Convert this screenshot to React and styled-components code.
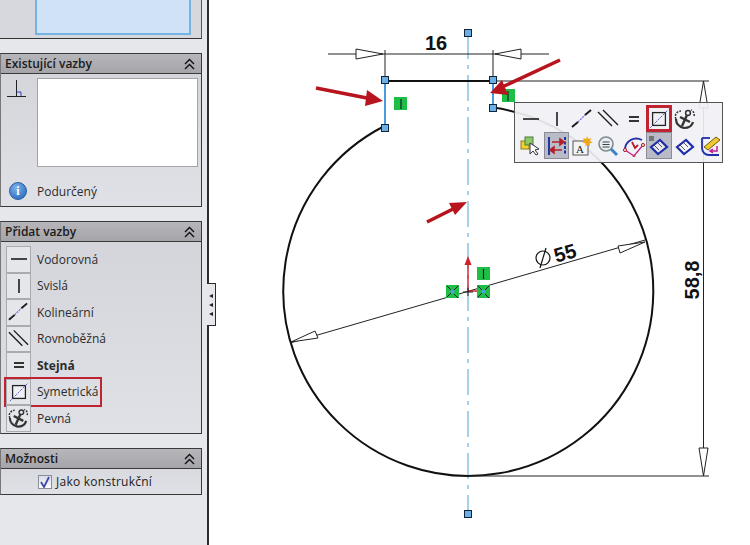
import React from "react";
import styled, { createGlobalStyle } from "styled-components";

const Global = createGlobalStyle`
  html, body { margin: 0; padding: 0; background: #fff; }
  body { font-family: "Open Sans", "Noto Sans", sans-serif; overflow: hidden; }
`;

const LineIcon = ({ children, size = 20 }) => (
  <svg width={size} height={size} viewBox={`0 0 ${size} ${size}`} fill="none" stroke="#1c1c1c" strokeWidth="1.6">
    {children}
  </svg>
);

const Horizontal = () => <LineIcon><path d="M2 10h16" /></LineIcon>;
const Vertical = () => <LineIcon><path d="M10 3v14" /></LineIcon>;
const Collinear = () => (
  <LineIcon size={24}>
    <path d="M2 20l6-5M15 8l6-5" strokeWidth="2" />
    <path d="M8 15l7-7" stroke="#6a6ad8" strokeWidth="1.200" strokeDasharray="2 1" />
  </LineIcon>
);
const Parallel = () => <LineIcon size={24}><path d="M2 5l14 14M7 3l15 15" strokeWidth="1.400" /></LineIcon>;
const Equal = () => <LineIcon size={16}><path d="M3 6h10M3 10h10" strokeWidth="2" stroke="#333" /></LineIcon>;
const Symmetric = () => (
  <svg width="22" height="22" viewBox="0 0 24 24" fill="none">
    <rect x="5" y="5" width="14" height="14" fill="#eef0f3" stroke="#222" strokeWidth="1.400" />
    <path d="M2 22L22 2" stroke="#5a5ad0" strokeWidth="1" strokeDasharray="3 1" />
  </svg>
);
const Anchor = () => (
  <svg width="24" height="24" viewBox="0 0 24 24" fill="none" stroke="#333" strokeWidth="1.500">
    <path d="M3 12c-2-4 1-8 5-8M21 9c1-3-1-5-3-6" strokeDasharray="2 1.200" />
    <circle cx="15" cy="6" r="2.400" />
    <path d="M14 8L9 19M7 10l10 5" strokeWidth="2.400" />
    <path d="M3 12c0 5 4 8 8 9 4 0 8-2 9-6" strokeWidth="2.200" />
  </svg>
);

const SelectIcon = () => (
  <svg width="22" height="22" viewBox="0 0 22 22">
    <rect x="1" y="6" width="8" height="8" fill="#f2d22e" stroke="#8a7a20" />
    <rect x="5" y="2" width="8" height="8" fill="#8ec86a" stroke="#4a7a3a" />
    <path d="M10 8l0 11 3-3 3 4 2-1-3-4 4-1z" fill="#fff" stroke="#333" />
  </svg>
);
const FlipIcon = () => (
  <svg width="22" height="22" viewBox="0 0 22 22" fill="none">
    <path d="M3 2v18" stroke="#2434a8" strokeWidth="2" />
    <path d="M19 2v18" stroke="#2434a8" strokeWidth="2" strokeDasharray="3 1.500" />
    <path d="M6 7h8M14 4l4 3-4 3z" stroke="#b3202a" strokeWidth="1.600" fill="#b3202a" />
    <path d="M16 15H8M8 12l-4 3 4 3z" stroke="#b3202a" strokeWidth="1.600" fill="#b3202a" />
  </svg>
);
const NoteIcon = () => (
  <svg width="22" height="22" viewBox="0 0 22 22">
    <rect x="2" y="6" width="15" height="14" fill="#f4f4f4" stroke="#555" />
    <text x="5" y="18" fontFamily="Liberation Serif, serif" fontSize="11" fill="#222">A</text>
    <path d="M16 1l1.400 3 3-1-1.400 3 2.600 1.600-3 .8.4 3-2.400-2-2.400 2 .4-3-3-.8L13.200 6l-1-3 3 1z" fill="#f0a818" />
  </svg>
);
const ZoomIcon = () => (
  <svg width="22" height="22" viewBox="0 0 22 22" fill="none">
    <circle cx="9" cy="9" r="7" fill="#e8eef2" stroke="#7e8a92" strokeWidth="1.600" />
    <path d="M5.500 7h7M5.500 9.500h7M5.500 12h7" stroke="#444" strokeWidth="1.100" />
    <path d="M14 14l6 6" stroke="#3c82c8" strokeWidth="3" />
  </svg>
);
const ArcIcon = () => (
  <svg width="24" height="22" viewBox="0 0 24 22" fill="none">
    <path d="M3 15C3 6 12 1 20 5" stroke="#2434a8" strokeWidth="1.800" />
    <path d="M3 15l9 6 9-11" stroke="#c01a8a" strokeWidth="1.200" />
    <path d="M10 7l3 6 3-3" stroke="#b3202a" strokeWidth="1.800" />
    <circle cx="3" cy="15" r="1.600" fill="#f4d0d8" stroke="#b3202a" />
    <circle cx="21" cy="10" r="1.600" fill="#f4d0d8" stroke="#b3202a" />
    <circle cx="12" cy="21" r="1" fill="#f4d0d8" stroke="#b3202a" />
  </svg>
);
const DimIcon = ({ marked }) => (
  <svg width="22" height="22" viewBox="0 0 22 22" fill="none">
    <path d="M3 12L12 5l7 7-9 7z" fill={marked ? "#e8e8ee" : "#f6f6fa"} stroke="#1f2fa8" strokeWidth="2.200" />
    {marked && <rect x="1" y="1" width="5" height="5" fill="#74777c" />}
    <path d="M6 10l5 5M10 8l4 4" stroke="#444" strokeWidth=".9" />
  </svg>
);
const EditIcon = () => (
  <svg width="24" height="24" viewBox="0 0 24 24" fill="none">
    <path d="M3 4v10c0 4 3 7 7 7h10" stroke="#1f2fa8" strokeWidth="1.800" />
    <path d="M3 4h8" stroke="#1f2fa8" strokeWidth="1.800" />
    <path d="M5 13L17 3l4 3-12 10z" fill="#f0c92e" stroke="#6a5a10" />
    <path d="M18 12v5h-6M14 15l-3 2 3 2" stroke="#c01a9a" strokeWidth="1.500" />
  </svg>
);

const Canvas = () => (
  <DrawingSvg viewBox="209 0 541 545">
    {/* centre line */}
    <path d="M468 33V514" stroke="#a6d2ea" strokeWidth="2" strokeDasharray="26 6 4 6" />

    {/* circle and flats */}
    <path d="M385 128L384.500 126A185 185 0 1 0 493 107.600" fill="none" stroke="#111" strokeWidth="2" />
    <path d="M385 81H493" stroke="#111" strokeWidth="2" />
    <path d="M385 81V128M493 81V108" stroke="#4a9ae0" strokeWidth="2" />

    {/* 16 */}
    <DimLine d="M328 54H549M385 50V80M493 50V80" />
    <ArrowHead points="383,54 356,49 356,59" />
    <ArrowHead points="495,54 521,49 521,59" />
    <DimText x="436" y="50" textAnchor="middle" fontSize="20">16</DimText>

    {/* diameter */}
    <DimLine d="M290 343L645 240" />
    <ArrowHead points="645,242 618,246 620,253" />
    <ArrowHead points="291,342 315,331 318,338" />
    <circle cx="543" cy="258" r="7" fill="none" stroke="#111" strokeWidth="1.200" />
    <path d="M546 248L540 268" stroke="#111" strokeWidth="1.200" />
    <DimText x="565" y="260" textAnchor="middle" fontSize="20" transform="rotate(-16 565 253)">55</DimText>

    {/* 58,8 */}
    <DimLine d="M493 81H709M468 476H709M703.500 81V476" />
    <ArrowHead points="703.500,81 699,108 708,108" />
    <ArrowHead points="703.500,476 699,448 708,448" />
    <DimText x="692" y="287" textAnchor="middle" fontSize="20" transform="rotate(-90 692 280)">58,8</DimText>

    {/* origin */}
    <path d="M468 292V262M468 291H478" stroke="#d0202a" strokeWidth="1.400" />
    <path d="M468 256l-3.500 9h7z" fill="#d0202a" />
    <path d="M463 292H473M468 288V296" stroke="#222" strokeWidth="1" />

    {/* relation badges */}
    <Badge x="394" y="97" width="13" height="13" />
    <path d="M401 99V109" stroke="#123" strokeWidth="1.200" />
    <Badge x="502" y="89" width="13" height="13" />
    <path d="M508 91V101" stroke="#123" strokeWidth="1.200" />
    <Badge x="477" y="267" width="13" height="13" />
    <path d="M483.500 269V279" stroke="#123" strokeWidth="1.200" />
    <Badge x="446" y="285" width="13" height="13" />
    <path d="M447 297L458 286M447 286l4 4M454 294l4 4" stroke="#123" strokeWidth="1" />
    <circle cx="452.500" cy="291.500" r="2" fill="#4aa0e0" />
    <Badge x="477" y="285" width="13" height="13" />
    <path d="M478 297L489 286M478 286l4 4M485 294l4 4" stroke="#123" strokeWidth="1" />
    <circle cx="483.500" cy="291.500" r="2" fill="#4aa0e0" />

    {/* handles */}
    {[[468, 33], [468, 514], [385, 80], [493, 80], [385, 128], [493, 108]].map(([x, y]) => (
      <Handle key={`${x}-${y}`} x={x - 3.5} y={y - 3.5} width="7" height="7" />
    ))}

    {/* red callout arrows */}
    <path d="M316 88L372 99" stroke="#b8141e" strokeWidth="3.500" />
    <path d="M383 101L367 90L365 106z" fill="#b8141e" />
    <path d="M560 60L500 88" stroke="#b8141e" strokeWidth="3.500" />
    <path d="M490 93L502 80L508 95z" fill="#b8141e" />
    <path d="M427 222L455 208" stroke="#b8141e" strokeWidth="3.500" />
    <path d="M467 202L449 203L455 215z" fill="#b8141e" />
  </DrawingSvg>
);

export default function App() {
  const relations = [
    { label: "Vodorovná", icon: <Horizontal /> },
    { label: "Svislá", icon: <Vertical /> },
    { label: "Kolineární", icon: <Collinear /> },
    { label: "Rovnoběžná", icon: <Parallel /> },
    { label: "Stejná", icon: <Equal />, bold: true },
    { label: "Symetrická", icon: <Symmetric />, marked: true },
    { label: "Pevná", icon: <Anchor /> },
  ];

  return (
    <Page>
      <Global />
      <Sidebar>
        <TopPanel>
          <SelectionBox />
        </TopPanel>

        <Panel>
          <PanelTitle title="Existující vazby" />
          <ExistingBody>
            <ExistingRow>
              <svg width="22" height="22" viewBox="0 0 22 22" fill="none" stroke="#222" strokeWidth="1">
                <path d="M1 18.500H20M10.500 2V18" />
                <path d="M10.500 14H15V18" stroke="#3040b0" />
              </svg>
              <RelationsList />
            </ExistingRow>
            <StatusRow>
              <InfoIcon>i</InfoIcon>
              <StatusText>Podurčený</StatusText>
            </StatusRow>
          </ExistingBody>
        </Panel>

        <Panel>
          <PanelTitle title="Přidat vazby" />
          <RelationList>
            {relations.map((r) => (
              <RelationRow key={r.label} $marked={r.marked}>
                <RelationIcon>{r.icon}</RelationIcon>
                <RelationLabel $bold={r.bold}>{r.label}</RelationLabel>
              </RelationRow>
            ))}
          </RelationList>
        </Panel>

        <Panel>
          <PanelTitle title="Možnosti" />
          <OptionBody>
            <CheckBox>
              <svg width="12" height="12" viewBox="0 0 12 12" fill="none">
                <path d="M2 6l3 5 5-10" stroke="#3b4aa8" strokeWidth="1.800" />
              </svg>
            </CheckBox>
            <OptionLabel>Jako konstrukční</OptionLabel>
          </OptionBody>
        </Panel>

        <CollapseTab>
          <i />
          <i />
          <i />
        </CollapseTab>
      </Sidebar>

      <CanvasArea>
        <Canvas />
        <Popup>
          <PopupCell><Horizontal /></PopupCell>
          <PopupCell><Vertical /></PopupCell>
          <PopupCell><Collinear /></PopupCell>
          <PopupCell><Parallel /></PopupCell>
          <PopupCell><Equal /></PopupCell>
          <PopupCell $marked><Symmetric /></PopupCell>
          <PopupCell><Anchor /></PopupCell>
          <PopupCell />
          <PopupCell><SelectIcon /></PopupCell>
          <PopupCell $active><FlipIcon /></PopupCell>
          <PopupCell><NoteIcon /></PopupCell>
          <PopupCell><ZoomIcon /></PopupCell>
          <PopupCell><ArcIcon /></PopupCell>
          <PopupCell $active><DimIcon marked /></PopupCell>
          <PopupCell><DimIcon /></PopupCell>
          <PopupCell><EditIcon /></PopupCell>
        </Popup>
      </CanvasArea>
    </Page>
  );
}

function PanelTitle({ title }) {
  return (
    <Header>
      <span>{title}</span>
      <svg width="11" height="12" viewBox="0 0 11 12" fill="none" stroke="#111" strokeWidth="1.400">
        <path d="M1 6l4.500-4.500L10 6M1 11l4.500-4.500L10 11" />
      </svg>
    </Header>
  );
}

const Page = styled.div`
  display: flex;
  width: 750px;
  height: 545px;
  overflow: hidden;
`;

const Sidebar = styled.div`
  position: relative;
  z-index: 1;
  flex: 0 0 209px;
  min-width: 0;
  box-sizing: border-box;
  height: 545px;
  padding-right: 5px;
  background: #e6e7eb;
  border-right: 2px solid #2b2b2b;
  display: flex;
  flex-direction: column;
  gap: 14px;
`;

const TopPanel = styled.div`
  box-sizing: border-box;
  height: 39px;
  padding-left: 35px;
  background: #d6d8dd;
  border-bottom: 1px solid #333;
  border-right: 1px solid #555;
`;

const SelectionBox = styled.div`
  box-sizing: border-box;
  width: 156px;
  height: 35px;
  background: #cfe2f6;
  border: 2px solid #74b3e2;
  border-top: none;
`;

const Panel = styled.section`
  border: 1px solid #3a3a3a;
  border-left-color: #777;
  background: linear-gradient(180deg, #d2d4da, #dfe1e6);
`;

const Header = styled.div`
  box-sizing: border-box;
  height: 20px;
  padding: 0 6px 0 4px;
  display: flex;
  align-items: center;
  justify-content: space-between;
  background: linear-gradient(180deg, #b6b6bb, #a4a4a9);
  border-bottom: 1px solid #3a3a3a;
  font-size: 12px;
  font-weight: 600;
  color: #1a1a1a;
`;

const ExistingBody = styled.div`
  height: 132px;
  box-sizing: border-box;
  padding: 4px 3px 0 5px;
`;

const ExistingRow = styled.div`
  display: flex;
  gap: 9px;
  align-items: flex-start;
`;

const RelationsList = styled.div`
  box-sizing: border-box;
  width: 161px;
  height: 89px;
  background: #fff;
  border: 1px solid #a4a4a8;
`;

const StatusRow = styled.div`
  margin-top: 15px;
  display: flex;
  align-items: center;
  gap: 10px;
  padding-left: 3px;
`;

const InfoIcon = styled.span`
  width: 18px;
  height: 18px;
  border-radius: 50%;
  display: flex;
  align-items: center;
  justify-content: center;
  background: radial-gradient(circle at 40% 30%, #7fb4ec, #1c5fb8);
  border: 1px solid #2a5c9e;
  box-sizing: border-box;
  color: #fff;
  font: 700 12px "Liberation Serif", serif;
`;

const StatusText = styled.span`
  font-size: 12px;
  color: #2c2c2c;
`;

const RelationList = styled.div`
  box-sizing: border-box;
  height: 191px;
  padding: 4px 0 0 5px;
  display: flex;
  flex-direction: column;
`;

const RelationRow = styled.div`
  position: relative;
  height: 26.500px;
  display: flex;
  align-items: center;
  gap: 6px;
  width: fit-content;
  padding-right: 2px;
  outline: ${(p) => (p.$marked ? "2px solid #bf2430" : "none")};
`;

const RelationIcon = styled.span`
  box-sizing: border-box;
  width: 25px;
  height: 26.500px;
  display: flex;
  align-items: center;
  justify-content: center;
  background: #e4e6ea;
  border: 1px solid #a9abb0;
`;

const RelationLabel = styled.span`
  font-size: 12px;
  font-weight: ${(p) => (p.$bold ? 700 : 400)};
  color: #2c2c2c;
`;

const OptionBody = styled.div`
  box-sizing: border-box;
  height: 25px;
  padding-left: 37px;
  display: flex;
  align-items: center;
  gap: 4px;
`;

const CheckBox = styled.span`
  box-sizing: border-box;
  width: 14px;
  height: 14px;
  display: flex;
  align-items: center;
  justify-content: center;
  background: linear-gradient(180deg, #d8dce6, #fdfdfe);
  border: 1px solid #8a8e96;
`;

const OptionLabel = styled.span`
  font-size: 12px;
  letter-spacing: 0.25px;
  color: #1c1c1c;
`;

const CollapseTab = styled.div`
  position: absolute;
  left: 207px;
  top: 283px;
  box-sizing: border-box;
  width: 9px;
  height: 43px;
  background: #e6e7eb;
  border: 1px solid #2b2b2b;
  border-left: none;
  display: flex;
  flex-direction: column;
  align-items: center;
  justify-content: center;
  gap: 5px;

  i {
    width: 0;
    height: 0;
    border: 2.500px solid transparent;
    border-left: none;
    border-right: 4px solid #222;
  }
`;

const CanvasArea = styled.main`
  position: relative;
  flex: 1;
  background: #fff;
`;

const DrawingSvg = styled.svg`
  display: block;
  width: 541px;
  height: 545px;
`;

const DimLine = styled.path`
  fill: none;
  stroke: #222;
  stroke-width: 1;
`;

const ArrowHead = styled.polygon`
  fill: #fff;
  stroke: #222;
  stroke-width: 1;
`;

const DimText = styled.text`
  font-family: "Liberation Sans", sans-serif;
  font-weight: 700;
  fill: #111;
`;

const Badge = styled.rect`
  fill: #1fbe44;
`;

const Handle = styled.rect`
  fill: #6cb0e6;
  stroke: #10243c;
  stroke-width: 1;
`;

const Popup = styled.div`
  position: absolute;
  left: 305px;
  top: 102px;
  box-sizing: border-box;
  width: 209px;
  height: 61px;
  padding: 2px 0 0 3px;
  background: rgba(241, 241, 245, 0.92);
  border: 1px solid #555;
  display: grid;
  grid-template-columns: repeat(8, 25.7px);
  grid-auto-rows: 27px;
`;

const PopupCell = styled.div`
  box-sizing: border-box;
  display: flex;
  align-items: center;
  justify-content: center;
  background: ${(p) => (p.$active ? "#b9bcc6" : "transparent")};
  border: ${(p) =>
    p.$marked ? "3px solid #bf2430" : p.$active ? "1px solid #8a8d96" : "none"};

  svg {
    flex: none;
  }
`;
